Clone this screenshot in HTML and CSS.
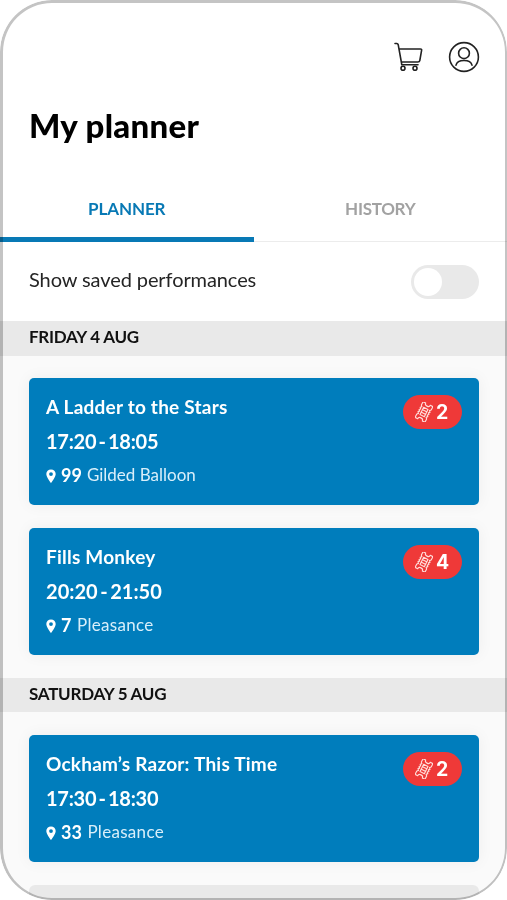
FILE: index.html
```html
<!DOCTYPE html>
<html lang="en">
<head>
<meta charset="utf-8">
<title>My planner</title>
<link rel="stylesheet" href="styles.css">
</head>
<body>
<svg width="0" height="0" class="defs" aria-hidden="true">
  <symbol id="pin" viewBox="0 0 10 15"><path fill="#fff" fill-rule="evenodd" d="M5 .5C2.3.5.3 2.5.3 5.1.3 8.5 5 14.2 5 14.2S9.700 8.500 9.700 5.100C9.700 2.500 7.700.500 5 .500ZM5 3.200A1.900 1.900 0 1 1 5 7 1.900 1.900 0 0 1 5 3.200Z"/></symbol>
  <symbol id="ticket" viewBox="0 0 18 20">
    <g transform="rotate(27 9 10)" fill="none" stroke="#ffdeda" stroke-width="1.150" stroke-linejoin="round">
      <path d="M3.500 1.200H6.400A2.600 2.200 0 0 0 11.600 1.200H14.500V5L13.300 6.300 14.500 7.600 13.300 8.800 14.500 10 13.300 11.200 14.500 12.400 13.300 13.700 14.500 15V18.800H11.600A2.600 2.200 0 0 0 6.400 18.800H3.500V15L4.700 13.700 3.500 12.400 4.700 11.200 3.500 10 4.700 8.800 3.500 7.600 4.700 6.300 3.500 5Z"/>
      <path d="M6.600 6H11.400V14H6.600ZM6.800 8.600H11.200M6.800 11.300H11.200"/>
    </g>
  </symbol>
</svg>
<div class="phone">
  <header class="top">
    <div class="actions">
      <svg class="cart" width="30" height="30" viewBox="0 0 30 30" fill="none" stroke="#222" stroke-width="1.600" stroke-linecap="round" stroke-linejoin="round">
        <path d="M1 1.500H2.800Q3.900 1.500 4.200 2.700L7.600 21.500M5.200 7H26.400Q27.900 7 27.600 8.400L25.800 18.500Q25.500 20 23.900 20H7.600M7.600 22.800H24"/>
        <circle cx="9" cy="26.200" r="2"/><circle cx="21" cy="26.200" r="2"/>
      </svg>
      <svg class="user" width="32" height="32" viewBox="0 0 32 32" fill="none" stroke="#222" stroke-width="1.600" stroke-linecap="round">
        <circle cx="16" cy="16" r="14.400"/><circle cx="16" cy="12.200" r="5.400"/><path d="M8 24.200C9.400 17.900 22.600 17.900 24 24.200"/>
      </svg>
    </div>
    <h1><span class="heading">My planner</span></h1>
  </header>
  <nav class="tabs">
    <a class="tab active"><span class="t-planner">PLANNER</span></a>
    <a class="tab"><span class="t-history">HISTORY</span></a>
  </nav>
  <div class="setting"><span class="setting-label">Show saved performances</span><span class="toggle"><span class="knob"></span></span></div>
  <h2 class="day"><span class="d-fri">FRIDAY 4 AUG</span></h2>
  <section class="list">
    <article class="card">
      <div><h3 class="c-ladder">A Ladder to the Stars</h3><p class="time">17:20 - 18:05</p>
      <p class="venue"><svg class="pin"><use href="#pin"/></svg><b>99</b><span class="v-gilded">Gilded Balloon</span></p></div>
      <span class="badge"><svg class="ticket"><use href="#ticket"/></svg>2</span>
    </article>
    <article class="card">
      <div><h3 class="c-fills">Fills Monkey</h3><p class="time evening">20:20 - 21:50</p>
      <p class="venue"><svg class="pin"><use href="#pin"/></svg><b>7</b><span class="v-pleasance">Pleasance</span></p></div>
      <span class="badge"><svg class="ticket"><use href="#ticket"/></svg>4</span>
    </article>
  </section>
  <h2 class="day second"><span class="d-sat">SATURDAY 5 AUG</span></h2>
  <section class="list">
    <article class="card">
      <div><h3 class="c-ockham">Ockham’s Razor: This Time</h3><p class="time">17:30 - 18:30</p>
      <p class="venue"><svg class="pin"><use href="#pin"/></svg><b>33</b><span class="v-pleasance">Pleasance</span></p></div>
      <span class="badge"><svg class="ticket"><use href="#ticket"/></svg>2</span>
    </article>
    <div class="next"></div>
  </section>
</div>
</body>
</html>
```
FILE: styles.css
```css
* { box-sizing: border-box; margin: 0; padding: 0; }
body { background: #fff; font-family: Lato, "Liberation Sans", sans-serif; color: #000; }
.defs { position: absolute; }
.phone { position: relative; width: 507px; height: 900px; overflow: hidden; border-radius: 52px; background: #fafafa; white-space: nowrap; }
.phone::after { content: ""; position: absolute; inset: 0; border: solid #c4c4c4; border-width: 3px 2px 2px 3px; border-radius: 52px; mix-blend-mode: multiply; }
.top { height: 179px; padding: 41px 27px 0 29px; background: #fff; }
.actions { display: flex; justify-content: flex-end; gap: 24px; height: 32px; }
.cart { margin-top: 1px; }
h1 { margin-top: 32px; font-size: 33px; line-height: 40px; font-weight: 900; letter-spacing: .3px; }
.tabs { display: flex; height: 63px; background: #fff; border-bottom: 1px solid #ececec; font-size: 17px; line-height: 60px; font-weight: 700; text-align: center; color: #a2a2a2; }
.tab { flex: 1; height: 63px; }
.t-planner { letter-spacing: -.1px; }
.t-history { letter-spacing: -.3px; }
.active { color: #0879b5; border-bottom: 5px solid #0879b5; }
.setting { display: flex; align-items: center; justify-content: space-between; height: 79px; padding: 0 28px 0 29px; background: #fff; font-size: 20px; color: #252525; }
.toggle { width: 68px; height: 34px; padding: 3px; border-radius: 17px; background: #e9e9e9; }
.knob { display: block; width: 28px; height: 28px; border-radius: 50%; background: #fff; }
.setting-label { margin-top: -5px; letter-spacing: -.09px; }
.day { height: 35px; padding-left: 29px; background: #e9e9e9; font-size: 17px; line-height: 32px; font-weight: 700; color: #111; letter-spacing: -.26px; }
.second { height: 34px; line-height: 31px; }
.list { display: flex; flex-direction: column; gap: 23px; padding: 22px 28px 23px 29px; }
.second + .list { padding-top: 23px; }
.card { display: flex; justify-content: space-between; align-items: flex-start; height: 127px; padding: 17px 17px 0; border-radius: 5px; background: #007dbc; color: #fff; box-shadow: 0 0 16px rgba(0,0,0,.055); }
h3, .time { font-size: 19px; line-height: 26px; font-weight: 700; letter-spacing: .22px; }
h3 { margin-top: -1px; }
.time { margin-top: 8px; font-size: 20px; letter-spacing: -.25px; word-spacing: -2.400px; }
.evening { letter-spacing: .03px; }
.venue { display: flex; align-items: center; margin-top: 9px; font-size: 17px; line-height: 24px; color: #d9effa; }
.venue b { margin: 0 6px 0 5px; font-size: 18px; color: #fff; }
.v-gilded { margin-left: -1px; }
.v-pleasance { margin-left: -.5px; letter-spacing: .3px; }
.pin { width: 10px; height: 15px; margin-top: 2px; }
.badge { display: flex; align-items: center; width: 59px; height: 34px; padding-left: 12px; gap: 3px; border-radius: 17px; background: #ef3938; font: 700 19.500px/34px Inter, sans-serif; }
.ticket { width: 18px; height: 20px; }
.next { height: 20px; flex: none; border-radius: 6px 6px 0 0; background: #e9e9e9; }
```
